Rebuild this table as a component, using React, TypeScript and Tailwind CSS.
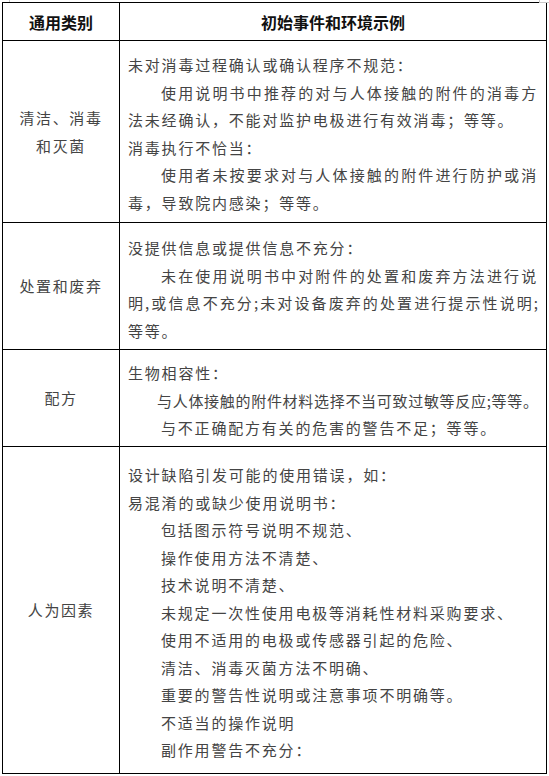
import React from "react";

type Line = { text: string; indent?: boolean; justify?: boolean; tight?: boolean };

const rows: { label: string[]; height: string; pad: string; lines: Line[] }[] = [
  {
    label: ["清洁、消毒", "和灭菌"],
    height: "h-[182px]",
    pad: "pt-[10px]",
    lines: [
      { text: "未对消毒过程确认或确认程序不规范：" },
      { text: "使用说明书中推荐的对与人体接触的附件的消毒方", indent: true, justify: true },
      { text: "法未经确认，不能对监护电极进行有效消毒；等等。" },
      { text: "消毒执行不恰当：" },
      { text: "使用者未按要求对与人体接触的附件进行防护或消", indent: true, justify: true },
      { text: "毒，导致院内感染；等等。" },
    ],
  },
  {
    label: ["处置和废弃"],
    height: "h-[127px]",
    pad: "pt-[11px]",
    lines: [
      { text: "没提供信息或提供信息不充分：" },
      { text: "未在使用说明书中对附件的处置和废弃方法进行说", indent: true, justify: true },
      { text: "明,或信息不充分;未对设备废弃的处置进行提示性说明;", justify: true, tight: true },
      { text: "等等。" },
    ],
  },
  {
    label: ["配方"],
    height: "h-[97px]",
    pad: "pt-[9px]",
    lines: [
      { text: "生物相容性：" },
      { text: "与人体接触的附件材料选择不当可致过敏等反应;等等。", indent: true, justify: true, tight: true },
      { text: "与不正确配方有关的危害的警告不足；等等。", indent: true },
    ],
  },
  {
    label: ["人为因素"],
    height: "h-[326px]",
    pad: "pt-[14px]",
    lines: [
      { text: "设计缺陷引发可能的使用错误，如：" },
      { text: "易混淆的或缺少使用说明书：" },
      { text: "包括图示符号说明不规范、", indent: true },
      { text: "操作使用方法不清楚、", indent: true },
      { text: "技术说明不清楚、", indent: true },
      { text: "未规定一次性使用电极等消耗性材料采购要求、", indent: true },
      { text: "使用不适用的电极或传感器引起的危险、", indent: true },
      { text: "清洁、消毒灭菌方法不明确、", indent: true },
      { text: "重要的警告性说明或注意事项不明确等。", indent: true },
      { text: "不适当的操作说明", indent: true },
      { text: "副作用警告不充分：", indent: true },
    ],
  },
];

const font = { fontFamily: '"Noto Sans CJK SC", "Noto Sans", sans-serif' };

const App = () => {
  return (
    <div className="relative min-h-[776px] w-[549px] bg-white pl-[2px] pt-[2px]" style={font}>
      {/* page corner marks */}
      <span className="absolute left-[539px] top-0 h-[3px] w-px bg-[#c8c8c8]" />
      <span className="absolute left-[539px] top-[2px] h-px w-[10px] bg-[#c8c8c8]" />
      <span className="absolute left-[9px] top-0 h-[2px] w-px bg-[#c8c8c8]" />

      <div className="w-[545px] border border-black">
        <div className="flex h-[38px] border-b border-black text-[16px] font-semibold text-[#111]">
          <div className="flex w-[117px] items-center justify-center border-r border-black">通用类别</div>
          <div className="flex flex-1 items-center justify-center">初始事件和环境示例</div>
        </div>

        {rows.map((row, i) => (
          <div
            key={i}
            className={`flex ${row.height} ${i < rows.length - 1 ? "border-b border-black" : ""}`}
          >
            <div className="flex w-[117px] flex-col items-center justify-center border-r border-black text-[15px] leading-[28px] tracking-[1.6px] text-[#444]">
              {row.label.map((l) => (
                <div key={l}>{l}</div>
              ))}
            </div>
            <div className={`flex-1 pl-[8px] pr-[8px] ${row.pad} text-[15px] leading-[27.5px] text-[#444]`}>
              {row.lines.map((ln, j) => (
                <div
                  key={j}
                  className={[
                    "whitespace-nowrap",
                    ln.tight ? "tracking-[0px]" : "tracking-[1.8px]",
                    ln.indent ? (ln.tight ? "pl-[29px]" : "pl-[33px]") : "",
                    ln.justify ? "text-justify [text-align-last:justify] [text-justify:inter-character]" : "",
                  ].join(" ")}
                >
                  {ln.text}
                </div>
              ))}
            </div>
          </div>
        ))}
      </div>
    </div>
  );
};

export default App;
